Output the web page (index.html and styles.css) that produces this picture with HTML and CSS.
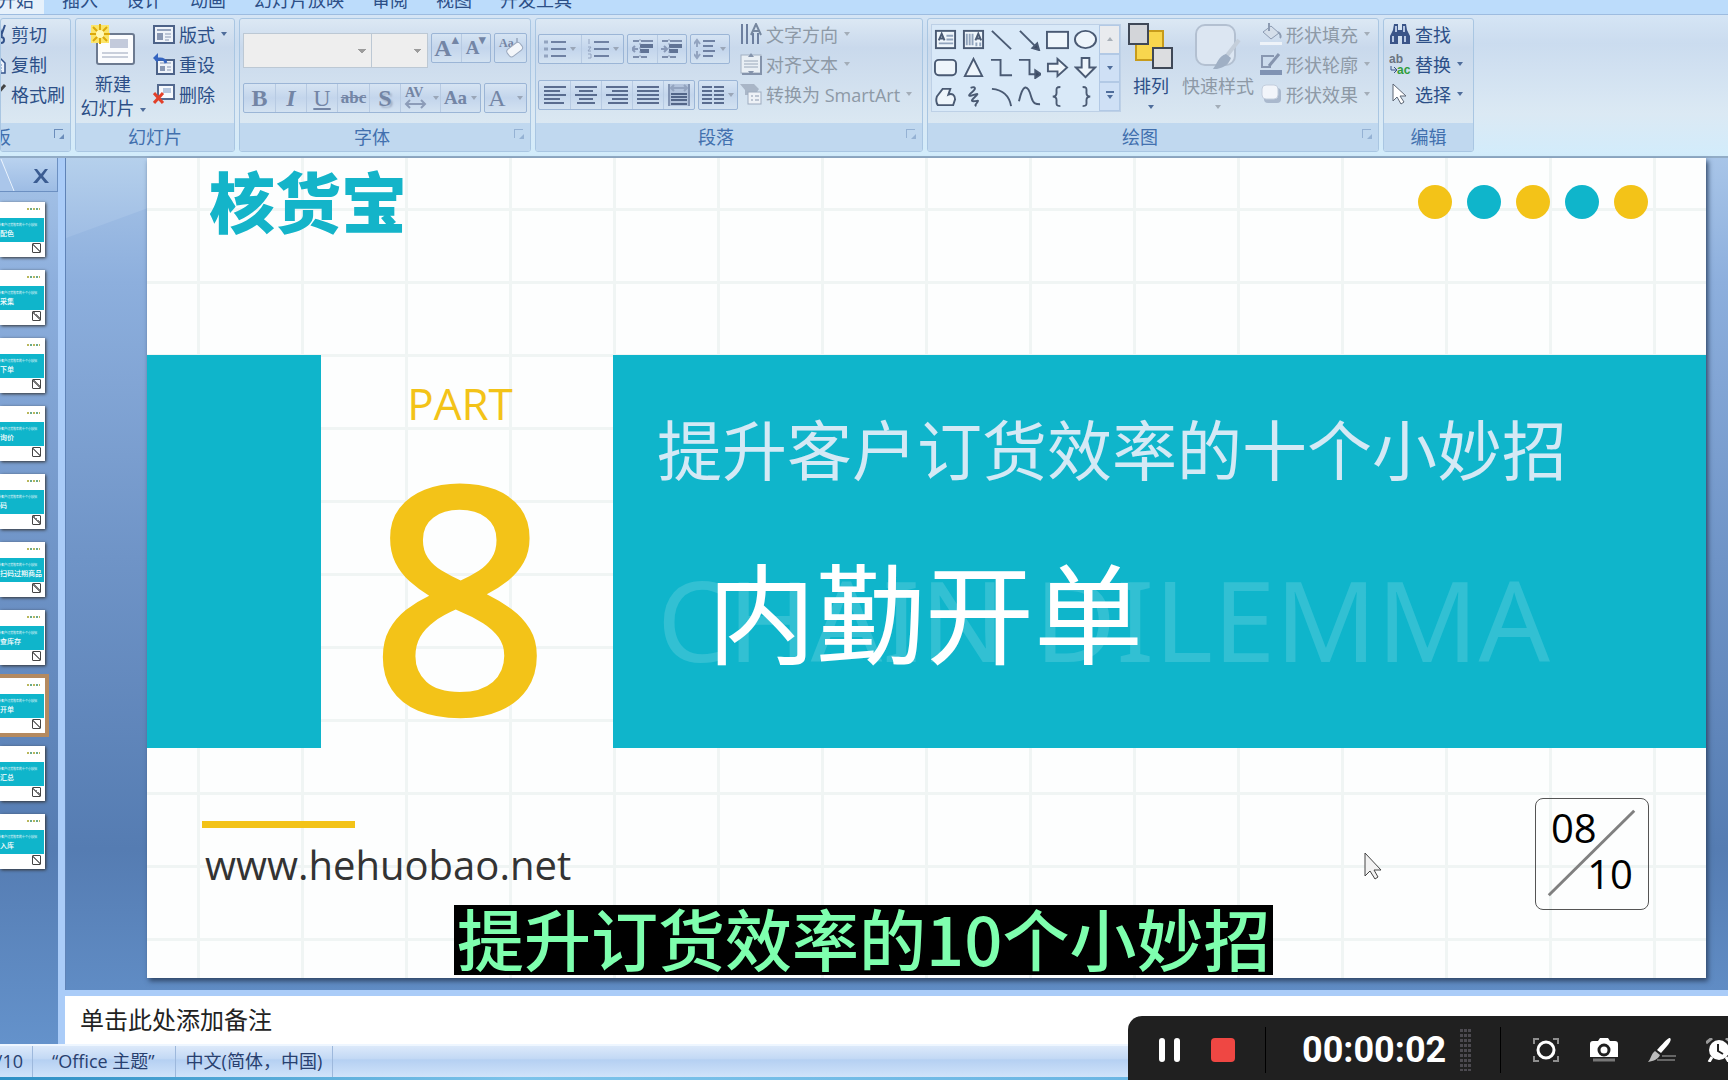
FILE: index.html
```html
<!DOCTYPE html>
<html lang="zh-CN">
<head>
  <meta charset="UTF-8">
  <meta name="viewport" content="width=device-width, initial-scale=1.0">
  <link rel="stylesheet" href="styles.css">
  <title>核货宝</title>
</head>
<body>
  <nav class="tabs">
    <button class="tab active">开始</button>
    <button class="tab">插入</button>
    <button class="tab">设计</button>
    <button class="tab">动画</button>
    <button class="tab">幻灯片放映</button>
    <button class="tab">审阅</button>
    <button class="tab">视图</button>
    <button class="tab">开发工具</button>
  </nav>

  <header class="ribbon">
    <!-- Clipboard -->
    <section class="group clipboard">
      <div class="group-body">
        <div class="stack">
          <button class="cmd">
            <svg class="icon" viewBox="0 0 22 22"><path d="M14 2l3 11M20 2l-4 11" stroke="#33538c" stroke-width="2" fill="none"/><circle cx="16" cy="17" r="3" fill="none" stroke="#33538c" stroke-width="2"/></svg>
            剪切</button>
          <button class="cmd">
            <svg class="icon" viewBox="0 0 22 22"><path d="M8 6h8l4 4v10H8z" fill="#eef4fc" stroke="#33538c" stroke-width="1.5"/><path d="M11 12h6M11 15h6M11 18h6" stroke="#5f7fb5"/></svg>
            复制</button>
          <button class="cmd">
            <svg class="icon" viewBox="0 0 22 22"><path d="M20 2l-7 8" stroke="#444" stroke-width="3"/><path d="M8 9l8 5-4 7-8-3z" fill="#5d5a55"/></svg>
            格式刷</button>
        </div>
      </div>
      <div class="group-label">剪贴板<i class="launcher"></i></div>
    </section>

    <!-- Slides -->
    <section class="group slides">
      <div class="group-body">
        <button class="big">
          <svg width="46" height="44" viewBox="0 0 46 44"><rect x="7" y="11" width="37" height="30" rx="2" fill="#fbfcfe" stroke="#6c7a90" stroke-width="2"/><rect x="20" y="16" width="18" height="9" fill="#c3cadb"/><path d="M12 30h26M12 34h26" stroke="#c9cfdb" stroke-width="2"/><rect x="1" y="2" width="18" height="18" fill="#fbe56a"/><path d="M10 1v20M0 11h20M3 4l14 14M17 4L3 18" stroke="#dba80c" stroke-width="2"/><circle cx="10" cy="11" r="4" fill="#fff9b8"/></svg>
          <span>新建</span><span>幻灯片<i class="caret"></i></span>
        </button>
        <div class="stack">
          <button class="cmd">
            <svg class="icon" viewBox="0 0 22 22"><rect x="1" y="3" width="20" height="17" fill="#eef3fa" stroke="#4c6288" stroke-width="2"/><path d="M4 7h14" stroke="#94a3bd" stroke-width="2"/><rect x="4" y="10" width="6" height="7" fill="#8897b3"/><path d="M12 11h6M12 14h6M12 17h4" stroke="#8897b3"/></svg>
            版式<i class="caret"></i></button>
          <button class="cmd">
            <svg class="icon" viewBox="0 0 22 22"><rect x="4" y="7" width="17" height="14" fill="#eef3fa" stroke="#4c6288" stroke-width="2"/><rect x="7" y="13" width="5" height="5" fill="#8897b3"/><path d="M7 10h11M14 14h4M14 17h4" stroke="#8897b3"/><path d="M2 6h5c4 0 5 1 6 4" fill="none" stroke="#3464c0" stroke-width="3"/><path d="M5 0v10L0 5z" fill="#3464c0"/></svg>
            重设</button>
          <button class="cmd">
            <svg class="icon" viewBox="0 0 22 22"><rect x="5" y="2" width="16" height="14" fill="#f6f9fd" stroke="#53698f" stroke-width="2"/><rect x="10" y="5" width="8" height="5" fill="#b5c6de"/><path d="M1 10l9 10M10 10L1 20" stroke="#e2402a" stroke-width="3"/></svg>
            删除</button>
        </div>
      </div>
      <div class="group-label">幻灯片</div>
    </section>

    <!-- Font -->
    <section class="group font">
      <div class="group-body rows">
        <div class="row row-top">
          <select class="combo combo-name" aria-label="字体" disabled></select>
          <select class="combo combo-size" aria-label="字号" disabled></select>
          <div class="set">
            <button class="fmt fmt-grow">A<sup>▴</sup></button>
            <button class="fmt fmt-shrink">A<sup>▾</sup></button>
          </div>
          <div class="set">
            <button class="fmt" aria-label="清除格式"><svg width="28" height="24" viewBox="0 0 28 24"><text x="2" y="11" class="tiny">Aa</text><path d="M20 2v10" stroke="#7a8aa5"/><rect x="10" y="9" width="16" height="9" rx="3" fill="#f3f6fa" stroke="#9aa8bd" transform="rotate(-38 18 14)"/></svg></button>
          </div>
        </div>
        <div class="row row-low">
          <div class="set">
            <button class="fmt serif">B</button>
            <button class="fmt serif italic">I</button>
            <button class="fmt serif light under">U</button>
            <button class="fmt serif strike">abc</button>
            <button class="fmt serif shade">S</button>
            <button class="fmt wide"><svg width="26" height="26" viewBox="0 0 26 26"><text x="2" y="12" class="tiny av">AV</text><path d="M3 19h18M7 15l-4 4 4 4M18 15l4 4-4 4" fill="none" stroke="#8c9cb8" stroke-width="2"/></svg><i class="caret"></i></button>
            <button class="fmt wide serif case">Aa<i class="caret"></i></button>
          </div>
          <div class="set">
            <button class="fmt color serif light">A<i class="caret"></i></button>
          </div>
        </div>
      </div>
      <div class="group-label with-launcher">字体<i class="launcher off"></i></div>
    </section>

    <!-- Paragraph -->
    <section class="group paragraph">
      <div class="group-body">
        <div class="rows">
          <div class="row row-top">
            <div class="set">
              <button class="fmt list"><svg class="lines" viewBox="0 0 22 22"><path d="M7 4h15M7 11h15M7 18h15" stroke="#5f7296" stroke-width="2"/><path d="M0 4h4M0 11h4M0 18h4" stroke="#8a9bb8" stroke-width="3"/></svg><i class="caret"></i></button>
              <button class="fmt list"><svg class="lines" viewBox="0 0 22 22"><path d="M7 4h15M7 11h15M7 18h15" stroke="#5f7296" stroke-width="2"/><path d="M2 1v5M1 9h3l-3 4h3M1 16h3v4H1" stroke="#8a9bb8" fill="none"/></svg><i class="caret"></i></button>
            </div>
            <div class="set">
              <button class="fmt dent"><svg class="lines" viewBox="0 0 22 22"><path d="M1 3h6M9 3h12M1 19h6M9 19h6" stroke="#6d7e9f" stroke-width="2"/><path d="M8 8h13M8 13h9" stroke="#4f6286" stroke-width="4"/><path d="M8 1v20" stroke="#8394b1" stroke-dasharray="2 2"/><path d="M0 11h6M3 8l-3 3 3 3" stroke="#7d8eae" fill="none" stroke-width="2"/></svg></button>
              <button class="fmt dent"><svg class="lines" viewBox="0 0 22 22"><path d="M1 3h6M9 3h12M1 19h6M9 19h6" stroke="#6d7e9f" stroke-width="2"/><path d="M8 8h13M8 13h9" stroke="#4f6286" stroke-width="4"/><path d="M8 1v20" stroke="#8394b1" stroke-dasharray="2 2"/><path d="M0 11h6M3 8l3 3-3 3" stroke="#7d8eae" fill="none" stroke-width="2"/></svg></button>
            </div>
            <div class="set">
              <button class="fmt list slim"><svg class="lines" viewBox="0 0 22 22"><path d="M9 3h12M9 8h10M9 13h12M9 18h10" stroke="#5f7296" stroke-width="2"/><path d="M3 3v6M3 13v6M0 6l3-4 3 4M0 16l3 4 3-4" stroke="#8a9bb8" fill="none" stroke-width="2"/></svg><i class="caret"></i></button>
            </div>
          </div>
          <div class="row row-low">
            <div class="set">
              <button class="fmt"><svg class="lines" viewBox="0 0 22 22"><path d="M0 3h22M0 7h16M0 11h22M0 15h16M0 19h20" stroke="#46597f" stroke-width="2"/></svg></button>
              <button class="fmt"><svg class="lines" viewBox="0 0 22 22"><path d="M0 3h22M4 7h14M0 11h22M4 15h14M2 19h18" stroke="#46597f" stroke-width="2"/></svg></button>
              <button class="fmt"><svg class="lines" viewBox="0 0 22 22"><path d="M0 3h22M6 7h16M0 11h22M6 15h16M2 19h20" stroke="#46597f" stroke-width="2"/></svg></button>
              <button class="fmt"><svg class="lines" viewBox="0 0 22 22"><path d="M0 3h22M0 7h22M0 11h22M0 15h22M0 19h22" stroke="#46597f" stroke-width="2"/></svg></button>
              <button class="fmt"><svg class="lines" viewBox="0 0 22 22"><rect width="22" height="22" fill="#aebfd9"/><path d="M1 0v22M21 0v22" stroke="#7587a8" stroke-width="2"/><path d="M3 4h16M6 1L3 4l3 3M16 1l3 3-3 3" fill="none" stroke="#8a9bb8" stroke-width="2"/><path d="M3 10h16M3 13h16M3 16h16M3 20h16" stroke="#3f5277" stroke-width="2"/></svg></button>
            </div>
            <div class="set">
              <button class="fmt list slim"><svg class="lines" viewBox="0 0 22 22"><path d="M0 3h10M0 7h10M0 11h10M0 15h10M0 19h10M12 3h10M12 7h10M12 11h10M12 15h10M12 19h10" stroke="#46597f" stroke-width="2"/></svg><i class="caret"></i></button>
            </div>
          </div>
        </div>
        <div class="stack off">
          <button class="cmd">
            <svg class="icon" viewBox="0 0 22 22"><path d="M2 1v20M7 1v20M13 10v11M18 10v11" stroke="#6d7f9f" stroke-width="2"/><path d="M11 12l5-11 5 11M13 8h6" stroke="#76879f" stroke-width="2" fill="none"/></svg>
            文字方向<i class="caret"></i></button>
          <button class="cmd">
            <svg class="icon" viewBox="0 0 22 22"><rect x="1" y="2" width="20" height="18" fill="#e9eff5" stroke="#a2b0c2"/><path d="M21 3v18H2" stroke="#8493ab" stroke-width="2" fill="none"/><path d="M4 8h14M4 11h14M4 14h14" stroke="#9aa8ba"/><path d="M8 4l3-4 3 4zM8 18l3 4 3-4z" fill="#8493ab"/></svg>
            对齐文本<i class="caret"></i></button>
          <button class="cmd">
            <svg class="icon" viewBox="0 0 22 22"><path d="M0 1h14l5 5-4 6H5V7z" fill="#a9b6c7"/><rect x="8" y="9" width="13" height="12" fill="#eef2f7" stroke="#9dabbf"/><path d="M11 13h2M15 13h4M11 17h2M15 17h4" stroke="#8c9ab0"/></svg>
            转换为 SmartArt<i class="caret"></i></button>
        </div>
      </div>
      <div class="group-label with-launcher">段落<i class="launcher off"></i></div>
    </section>

    <!-- Drawing -->
    <section class="group drawing">
      <div class="group-body">
        <div class="gallery">
          <div class="shapes">
            <svg viewBox="0 0 24 24"><rect x="2" y="3" width="20" height="18" fill="#eef5fb"/><path d="M13 8h7M13 12h7M5 16h15" stroke="#91a4bd"/><path d="M5 13l3-7 3 7M6 11h4"/></svg>
            <svg viewBox="0 0 24 24"><rect x="2" y="3" width="20" height="18" fill="#eef5fb"/><path d="M5 6v12M8 6v12M11 6v12M15 15v4M19 15v4" stroke="#91a4bd"/><path d="M14 13l3-7 3 7M15 11h4"/></svg>
            <svg viewBox="0 0 24 24"><path d="M2 3l20 19"/></svg>
            <svg viewBox="0 0 24 24"><path d="M2 3l18 18"/><path d="M22 23l-7-2 5-5z" fill="#3b4a62"/></svg>
            <svg viewBox="0 0 24 24"><rect x="1" y="4" width="22" height="17" fill="#eef5fb"/></svg>
            <svg viewBox="0 0 24 24"><ellipse cx="12" cy="12" rx="11" ry="9" fill="#eef5fb"/></svg>
            <svg viewBox="0 0 24 24"><rect x="1" y="4" width="22" height="16" rx="4" fill="#eef5fb"/></svg>
            <svg viewBox="0 0 24 24"><path d="M12 3l9 18H3z" fill="#eef5fb"/></svg>
            <svg viewBox="0 0 24 24"><path d="M1 4h10v16h12"/></svg>
            <svg viewBox="0 0 24 24"><path d="M1 4h11v15h9"/><path d="M24 19l-6-4v8z" fill="#3b4a62"/></svg>
            <svg viewBox="0 0 24 24"><path d="M2 8h10V3l10 9-10 9v-5H2z" fill="#eef5fb"/></svg>
            <svg viewBox="0 0 24 24"><path d="M8 2h8v10h6L12 22 2 12h6z" fill="#eef5fb"/></svg>
            <svg viewBox="0 0 24 24"><path d="M3 12l6-8h8l-2 6c4-2 7 1 7 5l-2 6H4c-2-3-2-6-1-9z" fill="#eef5fb"/></svg>
            <svg viewBox="0 0 24 24"><path d="M9 3c5-2 6 1 2 4s-5 5-1 4 8-3 5 0-7 6-3 6 6-2 4 1-3 3-1 4"/></svg>
            <svg viewBox="0 0 24 24"><path d="M2 4c12 1 18 7 20 18"/></svg>
            <svg viewBox="0 0 24 24"><path d="M1 17c4-18 9-19 13-4 2 7 5 7 9 7"/></svg>
            <svg viewBox="0 0 24 24"><path d="M15 2c-5 0-4 2-4 6 0 3-1 4-4 4 3 0 4 1 4 4 0 4-1 6 4 6"/></svg>
            <svg viewBox="0 0 24 24"><path d="M9 2c5 0 4 2 4 6 0 3 1 4 4 4-3 0-4 1-4 4 0 4 1 6-4 6"/></svg>
          </div>
          <div class="scroller">
            <button class="dim" aria-label="上一行"><i class="caret up"></i></button>
            <button aria-label="下一行"><i class="caret"></i></button>
            <button aria-label="更多"><i class="caret more"></i></button>
          </div>
        </div>
        <button class="big arrange">
          <svg width="46" height="46" viewBox="0 0 46 46"><rect x="8" y="8" width="27" height="29" fill="#f8d64e" stroke="#c79b1b" stroke-width="2"/><rect x="1" y="1" width="19" height="20" fill="#d3d5d9" stroke="#3f4857" stroke-width="2"/><rect x="25" y="25" width="19" height="20" fill="#dcdde0" stroke="#3f4857" stroke-width="2"/></svg>
          <span>排列</span><i class="caret"></i>
        </button>
        <button class="big off quick">
          <svg width="46" height="46" viewBox="0 0 46 46"><rect x="1" y="2" width="39" height="40" rx="9" fill="#dce6f2" stroke="#b3c0d1" stroke-width="2"/><path d="M44 17L30 35" stroke="#c4ceda" stroke-width="4"/><path d="M31 31l5 4c-3 8-8 10-19 12 5-5 6-14 14-16z" fill="#9fafc4"/></svg>
          <span>快速样式</span><i class="caret"></i>
        </button>
        <div class="stack off">
          <button class="cmd">
            <svg class="icon" viewBox="0 0 22 22"><path d="M3 9l8-6 8 7-8 6z" fill="#d4deea" stroke="#8c9bb2"/><path d="M9 8V0M18 9c3 2 3 5 2 6" stroke="#8c9bb2" stroke-width="2" fill="none"/><path d="M0 19h22v3H0z" fill="#eef3f9"/></svg>
            形状填充<i class="caret"></i></button>
          <button class="cmd">
            <svg class="icon" viewBox="0 0 22 22"><path d="M14 3H2v11h9" fill="none" stroke="#8897b1" stroke-width="2"/><path d="M19 1L9 13" stroke="#8594ae" stroke-width="3"/><path d="M0 17h22v5H0z" fill="#8093b3"/></svg>
            形状轮廓<i class="caret"></i></button>
          <button class="cmd">
            <svg class="icon" viewBox="0 0 22 22"><rect x="4" y="5" width="17" height="15" rx="4" fill="#a9b8cd"/><rect x="2" y="2" width="16" height="14" rx="4" fill="#f2f5fa" stroke="#c3cedd"/></svg>
            形状效果<i class="caret"></i></button>
        </div>
      </div>
      <div class="group-label with-launcher">绘图<i class="launcher off"></i></div>
    </section>

    <!-- Editing -->
    <section class="group editing">
      <div class="group-body">
        <div class="stack">
          <button class="cmd">
            <svg class="icon" viewBox="0 0 22 22"><path d="M5 1h4v6h4V1h4l1 6 3 6v8h-8v-8H9v8H1v-8l3-6z" fill="#3a5488"/><path d="M4 13v6M16 13v6M7 3v6M15 3v6" stroke="#b8c8e4" stroke-width="2"/></svg>
            查找</button>
          <button class="cmd">
            <svg class="icon" viewBox="0 0 22 22"><text x="0" y="10" class="rep">ab</text><text x="8" y="21" class="rep green">ac</text><path d="M2 13v4h5M5 14l3 3-3 3" fill="none" stroke="#3a5488"/></svg>
            替换<i class="caret"></i></button>
          <button class="cmd">
            <svg class="icon" viewBox="0 0 22 22"><path d="M4 1v17l4-4 4 7 3-2-4-6h6z" fill="#fff" stroke="#5c6675"/></svg>
            选择<i class="caret"></i></button>
        </div>
      </div>
      <div class="group-label">编辑</div>
    </section>
  </header>

  <main class="workspace">
    <aside class="outline">
      <div class="outline-head">
        <svg class="slant" viewBox="0 0 16 32"><path d="M0 0l13 32H0z" fill="#aac6ea"/><path d="M1 0l13 32" stroke="#eaf3fd" fill="none"/></svg>
        <button class="close" aria-label="关闭"><svg width="18" height="16" viewBox="0 0 18 16"><path d="M2 1h3l4 5 4-5h3l-5 7 6 7h-4l-4-5-4 5H1l6-7z" fill="#3b5c92"/></svg></button>
      </div>
      <div class="thumbs">
        <div class="thumb"><i></i><p><small>提升客户订货效率的十个小妙招</small>配色</p></div>
        <div class="thumb"><i></i><p><small>提升客户订货效率的十个小妙招</small>采集</p></div>
        <div class="thumb"><i></i><p><small>提升客户订货效率的十个小妙招</small>下单</p></div>
        <div class="thumb"><i></i><p><small>提升客户订货效率的十个小妙招</small>询价</p></div>
        <div class="thumb"><i></i><p><small>提升客户订货效率的十个小妙招</small>码</p></div>
        <div class="thumb"><i></i><p><small>提升客户订货效率的十个小妙招</small>扫码过期商品</p></div>
        <div class="thumb"><i></i><p><small>提升客户订货效率的十个小妙招</small>查库存</p></div>
        <div class="thumb current"><i></i><p><small>提升客户订货效率的十个小妙招</small>开单</p></div>
        <div class="thumb"><i></i><p><small>提升客户订货效率的十个小妙招</small>汇总</p></div>
        <div class="thumb"><i></i><p><small>提升客户订货效率的十个小妙招</small>入库</p></div>
      </div>
    </aside>

    <div class="editor">
      <div class="stage">
        <article class="slide">
          <div class="slide-top">
            <h1 class="logo">核货宝</h1>
            <div class="dots"><i></i><i></i><i></i><i></i><i></i></div>
          </div>
          <div class="band">
            <div class="band-left"></div>
            <div class="part"><span>PART</span><b>8</b></div>
            <div class="band-right">
              <h2>提升客户订货效率的十个小妙招</h2>
              <div class="topic">
                <span class="ghost">CHAIN DILEMMA</span>
                <h3>内勤开单</h3>
              </div>
            </div>
          </div>
          <div class="slide-foot">
            <div class="site">www.hehuobao.net</div>
            <div class="pager">
              <svg viewBox="0 0 114 112"><path d="M13 98l87-86" stroke="#808080" stroke-width="3"/></svg>
              <span>08</span><span class="total">10</span>
            </div>
          </div>
        </article>
        <svg class="pointer" viewBox="0 0 18 28"><path d="M1 1v23l5-5 5 8 3-2-4-7h7z" fill="#f2f2f2" stroke="#444"/></svg>
        <p class="caption">提升订货效率的10个小妙招</p>
      </div>
      <div class="notes">单击此处添加备注</div>
    </div>
  </main>

  <footer class="status">
    <span class="count">8/10</span>
    <span class="theme">“Office 主题”</span>
    <span class="lang">中文(简体，中国)</span>
  </footer>
  <div class="taskbar"></div>

  <!-- Screen recorder -->
  <div class="recorder">
    <div class="rec-main">
      <button aria-label="暂停"><svg width="22" height="24" viewBox="0 0 22 24"><rect x="0" y="0" width="6" height="24" rx="3" fill="#fff"/><rect x="15" y="0" width="6" height="24" rx="3" fill="#fff"/></svg></button>
      <button aria-label="停止"><svg width="24" height="24" viewBox="0 0 24 24"><rect width="24" height="24" rx="4" fill="#ef4743"/></svg></button>
    </div>
    <div class="rec-time"><time>00:00:02</time><i class="meter"></i></div>
    <div class="rec-tools">
      <button aria-label="聚焦"><svg width="28" height="24" viewBox="0 0 28 24"><path d="M2 6V1h5M21 1h5v5M26 18v5h-5M7 23H2v-5" fill="none" stroke="#8e8e8e" stroke-width="2"/><circle cx="14" cy="12" r="8" fill="none" stroke="#fff" stroke-width="3"/></svg></button>
      <button aria-label="截图"><svg width="28" height="24" viewBox="0 0 28 24"><path d="M3 3h5l2-3h8l2 3h5a3 3 0 013 3v13H0V6a3 3 0 013-3z" fill="#fff"/><circle cx="14" cy="12" r="5" fill="none" stroke="#202020" stroke-width="3"/><path d="M3 22h22" stroke="#777" stroke-width="3"/></svg></button>
      <button aria-label="画笔"><svg width="28" height="24" viewBox="0 0 28 24"><path d="M22 0c2 2 0 5-9 15l-4-3C18 2 20 0 22 0z" fill="#fff"/><path d="M7 13l5 4c-2 4-6 6-12 7 3-3 3-8 7-11z" fill="#bbb"/><path d="M14 18h14M9 22h18" stroke="#666" stroke-width="2"/></svg></button>
      <button aria-label="定时"><svg width="28" height="24" viewBox="0 0 28 24"><circle cx="13" cy="12" r="10" fill="#fff"/><path d="M0 5l6-5M20 0l6 5" stroke="#999" stroke-width="3"/><path d="M12 6v7l5 3" stroke="#202020" stroke-width="2" fill="none"/><path d="M6 19l-3 5M20 19l3 5" stroke="#fff" stroke-width="3"/></svg></button>
    </div>
  </div>
</body>
</html>
```
FILE: styles.css
```css
* {
  box-sizing: border-box;
}

body, h1, h2, h3, p {
  margin: 0;
  padding: 0;
  font-weight: normal;
}

body {
  display: flex;
  flex-direction: column;
  height: 100vh;
  overflow: hidden;
  position: relative;
  font-family: "Open Sans", "Noto Sans CJK SC", sans-serif;
  font-size: 18px;
  color: #2c4f87;
  background: #d3e6fa;
}

button {
  padding: 0;
  border: none;
  background: none;
  font: inherit;
  color: inherit;
  cursor: pointer;
  white-space: nowrap;
}

/* Tabs */
.tabs {
  display: flex;
  align-items: flex-end;
  height: 15px;
  overflow: hidden;
  flex: none;
  background: #bcdcfb;
  border-bottom: 1px solid #9dbce0;
}

.tab {
  padding: 0 14px 4px;
  line-height: 20px;
}

.tab.active {
  width: 44px;
  padding: 0 10px 4px 0;
  display: flex;
  justify-content: flex-end;
  background: #e6f1fb;
}

.tab.active + .tab {
  margin-left: 4px;
}

/* Ribbon */
.ribbon {
  display: flex;
  gap: 4px;
  height: 143px;
  padding: 3px 0 4px;
  flex: none;
  background: linear-gradient(#d5e5f5, #cbdcef 20%, #dbe9f4 70%, #d2ecfb);
  border-bottom: 2px solid #92acc6;
}

.group {
  display: flex;
  flex-direction: column;
  flex: none;
  border: 1px solid #a9c6e2;
  border-radius: 3px;
  overflow: hidden;
  background: linear-gradient(#dce8f4, #c9d9ec 22%, #dbe8f2 80%);
}

.group-body {
  display: flex;
  height: 108px;
}

.group-label {
  position: relative;
  flex: 1;
  line-height: 28px;
  text-align: center;
  color: #4270ae;
  background: #c0d8ef;
}

.group-label.with-launcher {
  padding-right: 26px;
}

.launcher {
  position: absolute;
  right: 7px;
  top: 6px;
  width: 9px;
  height: 9px;
  border-left: 1px solid #6b8dbb;
  border-top: 1px solid #6b8dbb;
}

.launcher::after {
  content: "";
  position: absolute;
  left: 4px;
  top: 4px;
  border-left: 5px solid transparent;
  border-bottom: 5px solid #6b8dbb;
}

.launcher.off {
  opacity: 0.5;
}

.caret {
  display: inline-block;
  width: 0;
  border: 3px solid transparent;
  border-top: 4px solid #4f6d9b;
  border-bottom: none;
}

.stack {
  display: flex;
  flex-direction: column;
  align-items: flex-start;
}

.cmd {
  display: flex;
  align-items: center;
  gap: 4px;
  height: 30px;
}

.cmd .caret {
  margin-left: 2px;
}

.icon {
  width: 22px;
  height: 22px;
}

.big {
  display: flex;
  flex-direction: column;
  align-items: center;
  padding-top: 4px;
  line-height: 24px;
}

.big svg {
  margin-bottom: 5px;
}

.off {
  color: #8d99a6;
}

.off .caret {
  border-top-color: #a3adb8;
}

.clipboard {
  width: 71px;
}

.clipboard .stack {
  margin-left: -16px;
}

.clipboard .group-label {
  text-align: left;
  text-indent: -44px;
}

.slides {
  width: 160px;
}

.slides .big {
  width: 66px;
  margin-left: 4px;
}

.slides .big .caret {
  margin-left: 5px;
  vertical-align: middle;
}

.slides .stack {
  margin-left: 7px;
}

/* Font and paragraph groups */
.font {
  width: 292px;
}

.rows {
  display: flex;
  flex-direction: column;
  padding: 14px 3px 0;
  gap: 15px;
}

.row {
  display: flex;
  gap: 3px;
  align-items: flex-start;
}

.row-top {
  height: 35px;
}

.set {
  display: flex;
  height: 30px;
  border: 1px solid #9bb5d6;
  border-radius: 2px;
  background: linear-gradient(#d6e4f3, #c3d5ec 50%, #d3e2f1);
}

.combo {
  height: 35px;
  border: 1px solid #bcc8d4;
  border-radius: 0;
  appearance: none;
  opacity: 1;
  background-color: #eeeeee;
  background-image: linear-gradient(45deg, transparent 50%, #9c9c9c 50%), linear-gradient(-45deg, transparent 50%, #9c9c9c 50%);
  background-repeat: no-repeat;
  background-size: 4px 4px;
  background-position: right 9px center, right 5px center;
}

.combo-name {
  width: 130px;
}

.combo-size {
  width: 58px;
  margin-left: -4px;
}

.fmt {
  display: flex;
  align-items: center;
  justify-content: center;
  width: 31px;
  color: #7385a5;
}

.fmt + .fmt {
  border-left: 1px solid #b7cae2;
}

.fmt .caret {
  margin-left: 4px;
  border-top-color: #9aa6b8;
}

.fmt-grow, .fmt-shrink {
  width: 29px;
  font: bold 24px "Liberation Serif", serif;
}

.fmt-shrink {
  font-size: 19px;
}

.fmt sup {
  font-size: 13px;
  line-height: 12px;
  align-self: flex-start;
}

.serif {
  font: bold 24px "Liberation Serif", serif;
}

.serif.light {
  font-weight: normal;
}

.italic {
  font-style: italic;
}

.under {
  text-decoration: underline;
}

.strike {
  width: 32px;
  font-size: 17px;
  text-decoration: line-through;
}

.shade {
  text-shadow: 2px 2px 2px #a0aec5;
}

.fmt.wide {
  width: 40px;
}

.case {
  font-size: 19px;
}

.fmt.color {
  width: 41px;
}

.color .caret {
  margin-left: 11px;
}

.tiny {
  font: bold 12px "Liberation Serif", serif;
  fill: #7485a3;
}

.tiny.av {
  font-size: 14px;
}

.lines {
  width: 22px;
  height: 22px;
  opacity: 0.85;
}

.fmt.list {
  width: 42px;
}

.fmt.slim {
  width: 38px;
}

.fmt.dent {
  width: 29px;
}

.paragraph {
  width: 388px;
}

.paragraph .rows {
  padding: 15px 2px 0;
  gap: 11px;
}

/* Drawing group */
.drawing {
  width: 452px;
}

.gallery {
  display: flex;
  width: 190px;
  height: 88px;
  margin: 5px 0 0 3px;
  border: 1px solid #bdd0e6;
  background: #d9e9f8;
}

.shapes {
  flex: 1;
  display: grid;
  grid-template-columns: repeat(6, 1fr);
  place-items: center;
}

.shapes svg {
  width: 23px;
  height: 23px;
  fill: none;
  stroke: #4a5a73;
  stroke-width: 2;
}

.scroller {
  display: flex;
  flex-direction: column;
  width: 21px;
}

.scroller button {
  flex: 1;
  display: flex;
  align-items: center;
  justify-content: center;
  border: 1px solid #b2c9e5;
  background: #cfe0f5;
}

.scroller .dim {
  background: #e9ebee;
}

.caret.up {
  border-top: none;
  border-bottom: 4px solid #a9b0b8;
}

.caret.more {
  position: relative;
}

.caret.more::before {
  content: "";
  position: absolute;
  left: -4px;
  top: -8px;
  width: 8px;
  height: 2px;
  background: #4f6d9b;
}

.arrange {
  width: 46px;
  margin-left: 7px;
}

.arrange .caret, .quick .caret {
  margin-top: 7px;
}

.quick {
  width: 76px;
  margin: 0 4px 0 6px;
}

.editing {
  width: 91px;
}

.editing .stack {
  margin-left: 5px;
}

.rep {
  font: bold 12px "Liberation Sans", sans-serif;
  fill: #6a7380;
}

.rep.green {
  fill: #2f9d3a;
}

/* Workspace */
.workspace {
  display: flex;
  flex: 1;
  min-height: 0;
  background: linear-gradient(#a8c5e8, #8dafdd 14%, #6f94c7 45%, #557cb2 78%, #6492cb);
}

.outline {
  width: 65px;
  flex: none;
  border-right: 7px solid #aaccf8;
  overflow: hidden;
}

.outline-head {
  display: flex;
  justify-content: space-between;
  align-items: center;
  height: 34px;
  padding-right: 7px;
  background: linear-gradient(#b9d2ef, #9dbce4);
  border-right: 1px solid #6c90c2;
  border-bottom: 1px solid #6c90c2;
}

.slant {
  width: 16px;
  height: 32px;
}

.close {
  display: flex;
  margin-top: 3px;
}

.thumbs {
  display: flex;
  flex-direction: column;
  gap: 13px;
  padding-top: 10px;
}

.thumb {
  width: 45px;
  height: 55px;
  padding-top: 16px;
  position: relative;
  background: #fff;
  box-shadow: 1px 1px 3px #333;
}

.thumb.current {
  box-shadow: 0 0 0 4px #b48a60;
}

.thumb i {
  position: absolute;
  right: 5px;
  top: 6px;
  width: 13px;
  height: 2px;
  background: repeating-linear-gradient(90deg, #b9b75a 0 2px, #fff 2px 3px, #69a98c 3px 5px, #fff 5px 6px);
}

.thumb p {
  width: 44px;
  height: 24px;
  overflow: hidden;
  background: #0fb5cb;
  color: #fff;
  font: 500 7px/8px "Noto Sans CJK SC", sans-serif;
  text-indent: -2px;
  white-space: nowrap;
}

.thumb small {
  display: flex;
  justify-content: flex-end;
  width: 37px;
  margin-top: 3px;
  font: 3px/8px "Noto Sans CJK SC", sans-serif;
  text-indent: 0;
}

.thumb::after {
  content: "";
  position: absolute;
  right: 4px;
  bottom: 4px;
  width: 7px;
  height: 8px;
  border: 1px solid #444;
  border-radius: 1px;
  background: linear-gradient(45deg, transparent 45%, #777 45% 60%, transparent 60%);
}

.editor {
  flex: 1;
  min-width: 0;
  display: flex;
  flex-direction: column;
}

.stage {
  flex: 1;
  display: flex;
  padding: 0 22px 12px 81px;
  position: relative;
  border-left: 1px solid #5f83b7;
}

.stage::before {
  content: "";
  position: absolute;
  left: 0;
  top: 0;
  width: 82px;
  height: 80px;
  background: linear-gradient(#b5d0ec, #9fbde4);
  clip-path: polygon(0 0, 100% 0, 100% 50px, 0 100%);
}

/* Slide */
.slide {
  flex: 1;
  position: relative;
  display: flex;
  flex-direction: column;
  background-color: #fdfefe;
  background-image: linear-gradient(90deg, #f0f5f4 3px, transparent 3px), linear-gradient(#f0f5f4 3px, transparent 3px);
  background-size: 104px 73px;
  background-position: 50px 50px;
  box-shadow: 2px 3px 5px #2f4667;
  font-family: "Open Sans", "Noto Sans CJK SC", sans-serif;
}

.slide-top {
  display: flex;
  justify-content: space-between;
  align-items: flex-start;
  height: 197px;
  padding: 0 58px 0 62px;
}

.logo {
  margin-top: 6px;
  font: 900 66px/70px "Noto Sans CJK SC", sans-serif;
  color: #14b4c9;
}

.dots {
  display: flex;
  gap: 15px;
  margin-top: 27px;
}

.dots i {
  width: 34px;
  height: 34px;
  border-radius: 50%;
  background: #f3c318;
}

.dots i:nth-child(even) {
  background: #0fb5cb;
}

.band {
  display: flex;
  height: 393px;
}

.band-left {
  width: 174px;
  background: #0fb5cb;
}

.part {
  width: 292px;
  padding: 16px 14px 0 0;
  display: flex;
  flex-direction: column;
  align-items: center;
  color: #f3c318;
}

.part span {
  font-size: 44px;
  line-height: 64px;
}

.part b {
  font: 500 320px/312px "Noto Sans", sans-serif;
}

.band-right {
  flex: 1;
  padding: 44px 0 0 44px;
  background: #0fb5cb;
  font-family: "Noto Sans CJK SC", sans-serif;
  white-space: nowrap;
}

.band-right h2 {
  font-size: 65px;
  line-height: 96px;
  color: #d4e9f5;
}

.topic {
  position: relative;
  margin-top: 42px;
}

.topic h3 {
  position: relative;
  padding-left: 50px;
  font-size: 109px;
  line-height: 144px;
  color: #fff;
}

.ghost {
  position: absolute;
  left: 0;
  top: 10px;
  font: 112px/144px "Noto Sans", sans-serif;
  color: #32c0d3;
}

.slide-foot {
  flex: 1;
  display: flex;
  justify-content: space-between;
  align-items: flex-start;
  padding: 50px 57px 0 55px;
}

.site {
  margin-top: 23px;
  padding: 17px 3px 0;
  position: relative;
  font-size: 40px;
  line-height: 54px;
  color: #333;
}

.site::before {
  content: "";
  position: absolute;
  left: 0;
  top: 0;
  width: 153px;
  height: 7px;
  background: #f3c318;
}

.pager {
  position: relative;
  display: flex;
  flex-direction: column;
  width: 114px;
  height: 112px;
  padding: 6px 15px;
  border: 1px solid #555;
  border-radius: 8px;
  font-size: 40px;
  line-height: 46px;
  color: #000;
}

.pager svg {
  position: absolute;
  left: 0;
  top: 0;
}

.pager .total {
  text-align: right;
}

.pointer {
  position: absolute;
  right: 346px;
  bottom: 110px;
  width: 18px;
  height: 28px;
}

.caption {
  position: absolute;
  left: 388px;
  bottom: 15px;
  padding: 0 3px 6px;
  background: #000;
  color: #7effae;
  font: 500 67px/64px "Noto Sans CJK SC", sans-serif;
  white-space: nowrap;
}

.notes {
  height: 54px;
  padding-left: 15px;
  border-top: 6px solid #aaccf8;
  background: #fff;
  font-size: 24px;
  line-height: 48px;
  color: #222;
}

/* Status bar */
.status {
  display: flex;
  flex: none;
  height: 33px;
  line-height: 30px;
  border-top: 2px solid #eef6ff;
  background: linear-gradient(#dce9fa, #c3d9f5 40%, #b5d0f2 45%, #d0e3fa);
  color: #28406f;
}

.status span {
  border-right: 1px solid #9db8dc;
  white-space: nowrap;
}

.count {
  width: 33px;
  padding-right: 9px;
  display: flex;
  justify-content: flex-end;
}

.theme {
  padding: 0 20px 0 19px;
}

.lang {
  padding: 0 10px;
}

.taskbar {
  height: 3px;
  flex: none;
  background: linear-gradient(90deg, #2d8fc4, #7cc3ea 30%, #5aa9dc);
}

/* Recorder */
.recorder {
  position: absolute;
  right: 0;
  bottom: 0;
  width: 600px;
  height: 64px;
  display: flex;
  align-items: center;
  padding-top: 4px;
  overflow: hidden;
  border-radius: 14px 0 0 0;
  background: #202020;
  color: #fff;
}

.recorder button {
  display: flex;
  flex: none;
}

.rec-main, .rec-time, .rec-tools {
  display: flex;
  align-items: center;
  flex: none;
  height: 46px;
}

.rec-main {
  gap: 30px;
  width: 137px;
  padding-left: 31px;
}

.rec-time {
  justify-content: space-between;
  width: 236px;
  padding: 0 28px 0 36px;
  border-left: 1px solid #000;
  border-right: 1px solid #000;
}

.rec-time time {
  font: bold 36px/44px Roboto, sans-serif;
}

.meter {
  width: 12px;
  height: 42px;
  background: repeating-linear-gradient(90deg, transparent 0 3px, #202020 3px 4px), repeating-linear-gradient(#4c4a50 0 3px, #202020 3px 5px);
}

.rec-tools {
  gap: 30px;
  padding-left: 31px;
}
```
